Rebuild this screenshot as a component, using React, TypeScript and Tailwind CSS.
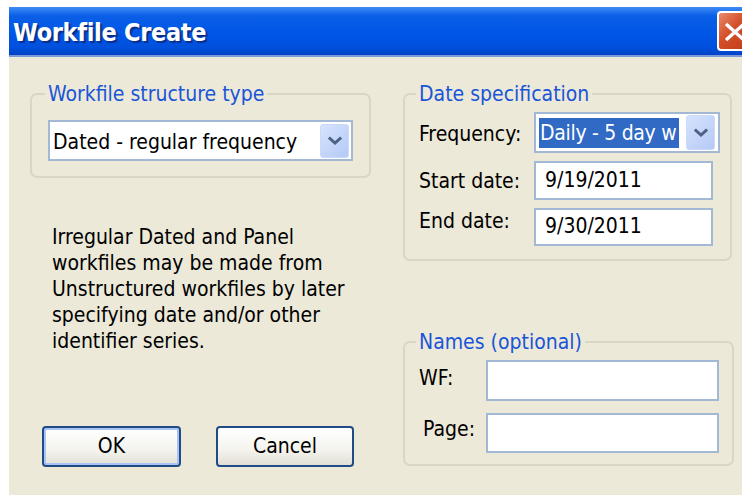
import React from "react";

const ui = "font-['DejaVu_Sans_Condensed','DejaVu_Sans','Liberation_Sans',sans-serif]";

function Chevron() {
  return (
    <svg width="14" height="10" viewBox="0 0 14 10">
      <path d="M2 2.5 L7 7 L12 2.5" fill="none" stroke="#4d6185" strokeWidth="3" strokeLinecap="square" />
    </svg>
  );
}

function DropButton({ h }: { h: string }) {
  return (
    <div
      className={`${h} w-[29px] shrink-0 rounded-[3px] border border-[#c9d8fb] bg-[linear-gradient(135deg,#d6e3fd,#b4c9f6)] flex items-center justify-center`}
    >
      <Chevron />
    </div>
  );
}

function Legend({ children }: { children: React.ReactNode }) {
  return (
    <legend className="ml-[-3px] px-[3px] text-[21px] leading-[24px] text-[#1a55d8]">{children}</legend>
  );
}

function TextBox({ value, w, h }: { value?: string; w: string; h: string }) {
  return (
    <div className={`${w} ${h} border-2 border-[#a3b8d4] bg-white flex items-center pl-[9px] text-[21px] text-black`}>
      {value}
    </div>
  );
}

function XPButton({ label, primary }: { label: string; primary?: boolean }) {
  return (
    <div
      className={`h-[41px] rounded-[4px] border-2 border-[#1f4b86] bg-[linear-gradient(#ffffff,#f4f3ee_60%,#e1dfd5)] flex items-center justify-center text-[21px] text-black ${
        primary ? "w-[139px] shadow-[inset_0_0_0_2px_#a8c4f2]" : "w-[138px]"
      }`}
    >
      {label}
    </div>
  );
}

export default function App() {
  return (
    <div className={`w-[742px] h-[495px] bg-white pl-[9px] pt-[7px] overflow-hidden ${ui}`}>
      <div className="flex flex-col h-full">
        {/* title bar */}
        <div className="h-[48px] shrink-0 flex items-center justify-between bg-[linear-gradient(#3f8cf6,#0b5fe6_18%,#0056e6_55%,#0050dc_85%,#0042c6)]">
          <span className="pl-[4px] pt-[3px] text-[25px] font-bold tracking-[-0.3px] text-white [text-shadow:2px_2px_1px_#0b2f8a]">
            Workfile Create
          </span>
          <div className="w-[27px] h-[40px] mr-[-2px] rounded-l-[4px] border-2 border-r-0 border-white bg-[linear-gradient(135deg,#e98a6c,#d24e27_50%,#c2401c)] flex items-center justify-end overflow-hidden">
            <svg width="22" height="24" viewBox="0 0 22 24" className="shrink-0">
              <path d="M4 5 L22 21 M22 5 L4 21" stroke="white" strokeWidth="3.5" />
            </svg>
          </div>
        </div>
        <div className="h-[2px] shrink-0 bg-[#7c9ad6]" />

        {/* dialog body */}
        <div className="flex-1 bg-[#ece9d8] flex pl-[21px] pt-[25px] text-[21px] text-black">
          {/* left column */}
          <div className="w-[339px] flex flex-col">
            <fieldset className="w-[339px] rounded-[7px] border-2 border-[#d9d6c6] px-[16px] pt-[14px] pb-[15px]">
              <Legend>Workfile structure type</Legend>
              <div className="w-[305px] h-[41px] border-2 border-[#a3b8d4] bg-white flex items-center justify-between pl-[3px] pr-[2px]">
                <span className="leading-[24px] pt-[2px] whitespace-nowrap">Dated - regular frequency</span>
                <DropButton h="h-[34px]" />
              </div>
            </fieldset>

            <p className="mt-[46px] ml-[22px] leading-[26px] whitespace-nowrap">
              Irregular Dated and Panel
              <br />
              workfiles may be made from
              <br />
              Unstructured workfiles by later
              <br />
              specifying date and/or other
              <br />
              identifier series.
            </p>

            <div className="mt-[72px] ml-[12px] flex gap-[35px]">
              <XPButton label="OK" primary />
              <XPButton label="Cancel" />
            </div>
          </div>

          {/* right column */}
          <div className="ml-[34px] w-[331px] flex flex-col">
            <fieldset className="w-[329px] rounded-[7px] border-2 border-[#d9d6c6] pl-[14px] pt-[6px] pb-[13px]">
              <Legend>Date specification</Legend>
              <div className="flex flex-col gap-[8px]">
                <div className="flex items-start">
                  <span className="w-[115px] pt-[10px] leading-[24px]">Frequency:</span>
                  <div className="w-[186px] h-[41px] border-2 border-[#a3b8d4] bg-white flex items-center justify-between pl-[3px] pr-[3px]">
                    <span className="w-[140px] h-[30px] bg-[#316ac5] text-white leading-[30px] pl-[1px] tracking-[-0.3px] whitespace-nowrap overflow-hidden">
                      Daily - 5 day w
                    </span>
                    <DropButton h="h-[35px]" />
                  </div>
                </div>
                <div className="flex items-start">
                  <span className="w-[115px] pt-[8px] leading-[24px]">Start date:</span>
                  <TextBox value="9/19/2011" w="w-[179px]" h="h-[39px]" />
                </div>
                <div className="flex items-start">
                  <span className="w-[115px] pt-[1px] leading-[24px]">End date:</span>
                  <TextBox value="9/30/2011" w="w-[179px]" h="h-[38px]" />
                </div>
              </div>
            </fieldset>

            <fieldset className="mt-[69px] w-[331px] rounded-[7px] border-2 border-[#d9d6c6] pl-[14px] pt-[6px] pb-[11px]">
              <Legend>Names (optional)</Legend>
              <div className="flex flex-col gap-[12px]">
                <div className="flex items-start">
                  <span className="w-[67px] pt-[6px] leading-[24px]">WF:</span>
                  <TextBox w="w-[233px]" h="h-[41px]" />
                </div>
                <div className="flex items-start">
                  <span className="w-[67px] pl-[4px] pt-[4px] leading-[24px]">Page:</span>
                  <TextBox w="w-[233px]" h="h-[40px]" />
                </div>
              </div>
            </fieldset>
          </div>
        </div>
      </div>
    </div>
  );
}
